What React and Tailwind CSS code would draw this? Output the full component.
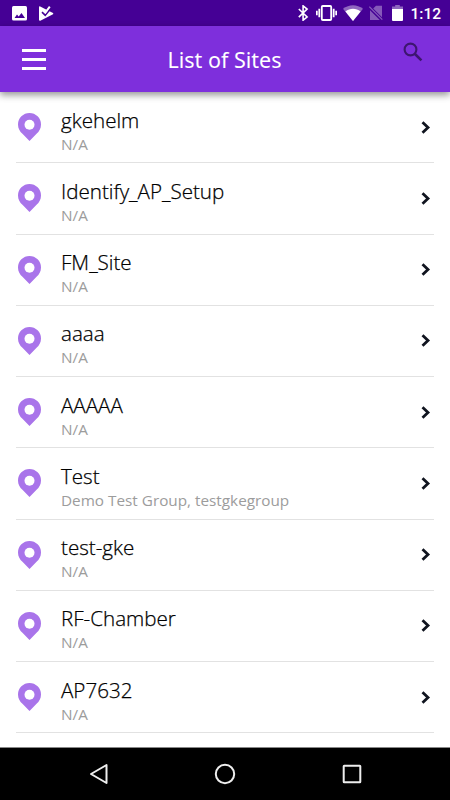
import React from "react";

const SITES = [
  { id: 1, name: "gkehelm", groups: "N/A" },
  { id: 2, name: "Identify_AP_Setup", groups: "N/A" },
  { id: 3, name: "FM_Site", groups: "N/A" },
  { id: 4, name: "aaaa", groups: "N/A" },
  { id: 5, name: "AAAAA", groups: "N/A" },
  { id: 6, name: "Test", groups: "Demo Test Group, testgkegroup" },
  { id: 7, name: "test-gke", groups: "N/A" },
  { id: 8, name: "RF-Chamber", groups: "N/A" },
  { id: 9, name: "AP7632", groups: "N/A" },
];

const StatusBar = () => (
  <div className="flex h-[26px] shrink-0 items-center bg-[#450095] pl-3 pr-[9px] text-white">
    {/* Notifications */}
    <svg className="h-[15px] w-[15px]" viewBox="0 0 15 15">
      <rect width="15" height="14.5" rx="1.5" fill="currentColor" />
      <path d="M2.5 12 5 8.5l1.7 2L9.5 7l3.5 5z" fill="#450095" />
    </svg>
    <svg className="ml-3 h-[15px] w-[15px]" viewBox="0 0 15 15">
      <path d="M0 1.2Q0 0 1.2.4L14 7Q14.7 7.8 14 8.3L1.3 14.8Q0 15 0 13.8z" fill="currentColor" />
      <path d="m3 6.2 3.2 3L11.8 2.4" fill="none" stroke="#450095" strokeWidth="1.7" />
      <path d="m4.5 4.6 1.9 1.9L10.8.6" fill="none" stroke="currentColor" strokeWidth="2" />
    </svg>

    {/* System icons */}
    <div className="ml-auto flex items-center">
      <svg className="h-4 w-[11px]" viewBox="0 0 11 16" fill="none" stroke="currentColor" strokeWidth="1.6">
        <path d="m.8 4 8.3 8-4 3.2V.9l4 3.2-8.3 8" />
      </svg>
      <svg className="ml-[7px] h-4 w-[21px]" viewBox="0 0 21 16" fill="none" stroke="currentColor" strokeWidth="1.8">
        <rect x="5.8" y="1" width="9.4" height="14" rx="1" />
        <path d="M3.3 3.8v8.4M.8 5.8v4.4M17.7 3.8v8.4M20.2 5.8v4.4" />
      </svg>
      <svg className="ml-[6px] h-4 w-[20px]" viewBox="0 0 20 16" fill="currentColor">
        <path d="M0 3.8C6-1 14-1 20 3.8L10 16z" opacity=".4" />
        <path d="M2.4 6.4C7 3 13 3 17.6 6.4L10 16z" />
      </svg>
      <svg className="ml-[6px] h-4 w-[14px]" viewBox="0 0 14 16" opacity=".35">
        <path d="M13 .8v11.5L4.2 3.6 7 .8zM1 5.2 10.8 15H1z" fill="currentColor" />
        <path d="m.3 1.6 13 13" stroke="currentColor" strokeWidth="1.3" />
      </svg>
      <svg className="ml-[9px] h-4 w-[11px]" viewBox="0 0 11 16" fill="currentColor">
        <path d="M3.2 0h4.6v1.5H11V4H0V1.5h3.2z" opacity=".4" />
        <path d="M0 4h11v11q0 1-1 1H1q-1 0-1-1z" />
      </svg>
      <span className="ml-[7px] pt-px font-['Roboto',sans-serif] text-[15.5px] font-medium leading-[26px]">1:12</span>
    </div>
  </div>
);

const Header = () => (
  <header className="relative flex h-[66px] shrink-0 items-center justify-between bg-[#7e2fdc] pl-[22px] pr-[27px] shadow-[0_3px_7px_rgba(0,0,0,0.42)]">
    <button aria-label="Menu" className="flex w-6 flex-col gap-[6px]">
      <span className="h-[3px] bg-white" />
      <span className="h-[3px] bg-white" />
      <span className="h-[3px] bg-white" />
    </button>
    <h1 className="pt-[2px] font-['Noto_Sans','Open_Sans',sans-serif] text-[21.5px] leading-7 text-white">List of Sites</h1>
    <button aria-label="Search" className="mb-[14px]">
      <svg className="h-5 w-5" viewBox="0 0 20 20" fill="none" stroke="#3d1670">
        <circle cx="7.5" cy="7.5" r="5.9" strokeWidth="2.1" />
        <path d="m12 12 6.4 6.4" strokeWidth="2.6" />
      </svg>
    </button>
  </header>
);

const SiteRow = ({ site }) => (
  <li className="flex h-[71.25px] items-center border-b border-[#e2e2e2]">
    <svg className="ml-[2px] h-7 w-[23px] shrink-0" viewBox="0 0 23 28">
      <path
        d="M11.5 0A11.5 11.5 0 0 0 0 11.5c0 4.2 2 7 4.2 9.1L11.5 28l7.3-7.4C21 18.5 23 15.7 23 11.5A11.5 11.5 0 0 0 11.5 0z"
        fill="#a974ea"
      />
      <circle cx="11.5" cy="11.8" r="5" fill="#fff" />
    </svg>
    <div className="ml-5 flex-1 pt-[7px]">
      <p className="text-[20.6px] font-light leading-[26px] text-black [-webkit-text-stroke:0.25px_#000]">
        {site.name}
      </p>
      <p className="text-[15.3px] leading-[22px] text-[#9c9c9c]">{site.groups}</p>
    </div>
    <svg className="mr-[3px] h-[13px] w-[10px]" viewBox="0 0 10 13" fill="none" stroke="#10141f" strokeWidth="2.8">
      <path d="m1.5 1.3 5.5 5.2-5.5 5.2" />
    </svg>
  </li>
);

const NavBar = () => (
  <nav className="flex h-[53px] shrink-0 items-center justify-between border-t border-[#888] bg-black pl-[89px] pr-[88px]">
    <svg className="h-[22px] w-5" viewBox="0 0 20 22" fill="none" stroke="#eee" strokeWidth="2">
      <path d="M17.5 2v18L2 11z" strokeLinejoin="round" />
    </svg>
    <svg className="-ml-px h-[22px] w-[22px]" viewBox="0 0 22 22" fill="none" stroke="#eee" strokeWidth="2">
      <circle cx="11" cy="11" r="9.2" />
    </svg>
    <svg className="h-5 w-5" viewBox="0 0 20 20" fill="none" stroke="#eee" strokeWidth="2">
      <rect x="1.7" y="1.7" width="16.6" height="16.6" rx=".5" />
    </svg>
  </nav>
);

const App = () => {
  return (
    <div className="flex h-[800px] w-[450px] flex-col overflow-hidden bg-white font-['Open_Sans','Noto_Sans',sans-serif]">
      <StatusBar />
      <Header />
      <main className="flex-1 overflow-hidden px-4">
        <ul>
          {SITES.map((site) => (
            <SiteRow key={site.id} site={site} />
          ))}
        </ul>
      </main>
      <NavBar />
    </div>
  );
};

export default App;
